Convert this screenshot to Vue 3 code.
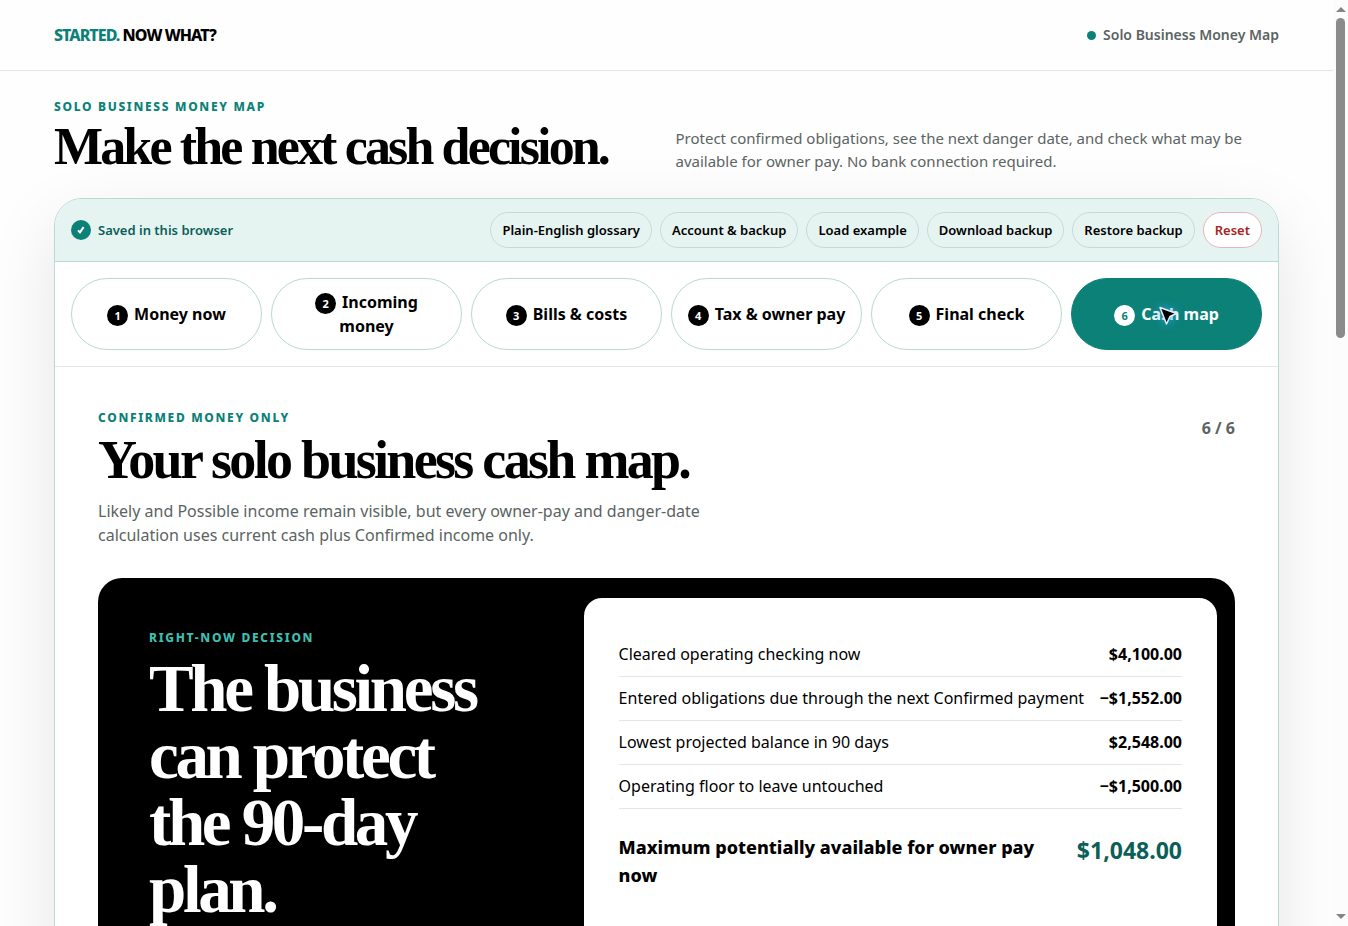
<template>
    <div class="window">
        <div class="page">
            <header class="site-header">
                <a class="brand" href="#"><span class="brand-accent">STARTED.</span> NOW WHAT?</a>
                <div class="product-label"><span class="product-dot"></span>Solo Business Money Map</div>
            </header>

            <main class="content">
                <section class="hero">
                    <div>
                        <p class="eyebrow">Solo Business Money Map</p>
                        <h1 class="hero-title">Make the next cash decision.</h1>
                    </div>
                    <p class="hero-text">Protect confirmed obligations, see the next danger date, and check what may be available for owner pay. No bank connection required.</p>
                </section>

                <section class="planner">
                    <div class="toolbar">
                        <div class="save-state">
                            <span class="save-icon">
                                <svg viewBox="0 0 20 20" fill="none" stroke="currentColor" stroke-width="2">
                                    <path d="M7 10.4 L8.9 12.4 L12.6 7.2" />
                                </svg>
                            </span>
                            Saved in this browser
                        </div>
                        <div class="toolbar-actions">
                            <button v-for="action in actions" :key="action" type="button" class="tool-button" :class="{ danger: action === 'Reset' }">
                                {{ action }}
                            </button>
                        </div>
                    </div>

                    <nav class="steps" aria-label="Money map steps">
                        <button v-for="(step, idx) in steps" :key="step" type="button" class="step" :class="{ active: current === idx + 1 }" @click="current = idx + 1">
                            <span class="step-number">{{ idx + 1 }}</span>{{ step }}
                        </button>
                        <svg class="pointer" viewBox="0 0 40 40" aria-hidden="true">
                            <path d="M12 13.5 L28.5 19.5 L22 22.5 L18.5 30 Z" fill="#000" stroke="#e8eef2" stroke-width="1.5" stroke-linejoin="round" />
                        </svg>
                    </nav>

                    <div class="step-body">
                        <div class="step-head">
                            <div class="step-intro">
                                <p class="eyebrow">Confirmed money only</p>
                                <h2 class="step-title">Your solo business cash map.</h2>
                                <p class="step-text">Likely and Possible income remain visible, but every owner-pay and danger-date calculation uses current cash plus Confirmed income only.</p>
                            </div>
                            <span class="step-count">{{ current }} / {{ steps.length }}</span>
                        </div>

                        <div class="decision">
                            <div class="decision-copy">
                                <p class="eyebrow light">Right-now decision</p>
                                <h3 class="decision-title">The business can protect the 90-day plan.</h3>
                            </div>
                            <dl class="figures">
                                <div v-for="row in rows" :key="row.label" class="figure-row">
                                    <dt>{{ row.label }}</dt>
                                    <dd>{{ formatMoney(row.amount) }}</dd>
                                </div>
                                <div class="figure-row total">
                                    <dt>Maximum potentially available for owner pay now</dt>
                                    <dd>{{ formatMoney(available) }}</dd>
                                </div>
                            </dl>
                        </div>
                    </div>
                </section>
            </main>
        </div>

        <div class="scrollbar" aria-hidden="true">
            <svg class="scroll-arrow" viewBox="0 0 10 6"><path d="M0 6 L5 1 L10 6 Z" /></svg>
            <div class="scroll-track">
                <div class="scroll-thumb"></div>
            </div>
            <svg class="scroll-arrow" viewBox="0 0 10 6"><path d="M0 0 L5 5 L10 0 Z" /></svg>
        </div>
    </div>
</template>

<script setup>
import { ref } from "vue"

const current = ref(6)

const actions = [
    "Plain-English glossary",
    "Account & backup",
    "Load example",
    "Download backup",
    "Restore backup",
    "Reset"
]

const steps = [
    "Money now",
    "Incoming money",
    "Bills & costs",
    "Tax & owner pay",
    "Final check",
    "Cash map"
]

const rows = [
    { label: "Cleared operating checking now", amount: 4100 },
    { label: "Entered obligations due through the next Confirmed payment", amount: -1552 },
    { label: "Lowest projected balance in 90 days", amount: 2548 },
    { label: "Operating floor to leave untouched", amount: -1500 }
]

const available = 1048

const formatMoney = (val) => {
    const text = new Intl.NumberFormat("en-US", { style: "currency", currency: "USD" }).format(Math.abs(val))
    return val < 0 ? "−" + text : text
}
</script>

<style>
body {
    margin: 0;
    background: #fefefe;
}
</style>

<style scoped>
.window {
    display: flex;
    height: 100vh;
    overflow: hidden;
    font-family: "Noto Sans", sans-serif;
    font-size: 16px;
    line-height: 24px;
    color: #000;
}

.window * {
    box-sizing: border-box;
}

.page {
    flex: 1;
    min-width: 0;
    overflow: hidden;
}

p, h1, h2, h3, dl, dd {
    margin: 0;
}

button {
    font-family: inherit;
    cursor: pointer;
}

.site-header {
    display: flex;
    align-items: center;
    justify-content: space-between;
    padding: 23px 54px;
    border-bottom: 1px solid #e2e6e5;
}

.brand {
    color: #000;
    font-weight: 800;
    letter-spacing: -0.06em;
    text-decoration: none;
}

.brand-accent {
    color: #0b8178;
}

.product-label {
    display: flex;
    align-items: center;
    gap: 7px;
    font-size: 14px;
    font-weight: 600;
    color: #5b6462;
}

.product-dot {
    width: 9px;
    height: 9px;
    border-radius: 50%;
    background: #0b8178;
}

.content {
    padding: 0 54px;
}

.hero {
    display: grid;
    grid-template-columns: 1fr 1fr;
    gap: 18px;
    align-items: end;
    padding: 27px 0 25px;
}

.eyebrow {
    font-size: 12px;
    line-height: 18px;
    font-weight: 800;
    letter-spacing: 0.14em;
    text-transform: uppercase;
    color: #0b8178;
}

.eyebrow.light {
    color: #3cbfb1;
}

.hero-title,
.step-title,
.decision-title {
    font-family: "Liberation Serif", serif;
    font-weight: 700;
    letter-spacing: -0.05em;
}

.hero-title {
    margin-top: 4px;
    font-size: 52px;
    line-height: 53px;
    letter-spacing: -0.055em;
    white-space: nowrap;
}

.hero-text {
    font-size: 15px;
    line-height: 23px;
    color: #5b6462;
}

.planner {
    border: 1px solid #b9d9d4;
    border-radius: 28px;
    background: #fff;
    box-shadow: 0 24px 70px rgba(0, 0, 0, 0.1);
    overflow: hidden;
}

.toolbar {
    display: flex;
    align-items: center;
    justify-content: space-between;
    padding: 13px 16px;
    background: #e5f4f1;
    border-bottom: 1px solid #b9d9d4;
}

.save-state {
    display: flex;
    align-items: center;
    gap: 7px;
    font-size: 13px;
    font-weight: 600;
    color: #0b5f58;
}

.save-icon {
    display: flex;
    width: 20px;
    height: 20px;
    border-radius: 50%;
    background: #0b8178;
    color: #fff;
}

.toolbar-actions {
    display: flex;
    gap: 8px;
}

.tool-button {
    padding: 8px 11px;
    border: 1px solid #c3dbd7;
    border-radius: 18px;
    background: transparent;
    color: #000;
    font-size: 13px;
    line-height: 18px;
    font-weight: 600;
}

.tool-button.danger {
    border-color: #eab4bb;
    background: #fff;
    color: #a82424;
}

/* Step navigation */
.steps {
    position: relative;
    display: grid;
    grid-template-columns: repeat(6, 1fr);
    gap: 9px;
    padding: 16px;
    border-bottom: 1px solid #e2e8e7;
}

.step {
    padding: 11px 14px;
    border: 1px solid #b9d9d4;
    border-radius: 36px;
    background: #fff;
    color: #000;
    font-size: 16px;
    line-height: 24px;
    font-weight: 700;
}

.step-number {
    display: inline-grid;
    place-items: center;
    width: 21px;
    height: 21px;
    margin-right: 6px;
    border-radius: 50%;
    background: #000;
    color: #fff;
    font-size: 11px;
    line-height: 21px;
}

.step.active {
    border-color: #0b8178;
    background: #0b8178;
    color: #fff;
}

.step.active .step-number {
    background: #fff;
    color: #0b8178;
}

.pointer {
    position: absolute;
    right: 90px;
    top: 32px;
    width: 40px;
    height: 40px;
    filter: drop-shadow(0 0 5px #2fa5f0);
    pointer-events: none;
}

.step-body {
    padding: 42px 43px;
}

.step-head {
    display: flex;
    justify-content: space-between;
}

.step-intro {
    max-width: 650px;
}

.step-title {
    margin-top: 5px;
    font-size: 54px;
    line-height: 56px;
    white-space: nowrap;
}

.step-text {
    margin-top: 11px;
    color: #5b6462;
}

.step-count {
    margin-top: 7px;
    font-weight: 700;
    color: #5b6462;
}

/* Decision panel */
.decision {
    display: grid;
    grid-template-columns: 23fr 30fr;
    margin-top: 31px;
    padding: 20px 18px 20px 0;
    border-radius: 24px;
    background: #000;
}

.decision-copy {
    padding: 31px 60px 31px 51px;
    color: #fff;
}

.decision-title {
    margin-top: 8px;
    font-size: 67px;
    line-height: 67px;
}

.figures {
    padding: 35px;
    border-radius: 18px;
    background: #fff;
}

.figure-row {
    display: flex;
    justify-content: space-between;
    gap: 12px;
    padding: 10px 0;
    border-bottom: 1px solid #e2e6e5;
    line-height: 23px;
}

.figure-row dd {
    font-weight: 700;
    white-space: nowrap;
}

.figure-row.total {
    gap: 28px;
    padding: 24px 0;
    border-bottom: 0;
    font-size: 18px;
    line-height: 28px;
    font-weight: 800;
}

.figure-row.total dd {
    font-size: 23px;
    line-height: 34px;
    color: #0b5f58;
}

.scrollbar {
    display: flex;
    flex-direction: column;
    align-items: center;
    justify-content: space-between;
    width: 15px;
    padding: 6px 0;
    background: #fcfcfc;
}

.scroll-arrow {
    width: 10px;
    height: 6px;
    fill: #858585;
}

.scroll-track {
    flex: 1;
    padding: 6px 0;
}

.scroll-thumb {
    width: 9px;
    height: 36%;
    border-radius: 5px;
    background: #8b8b8b;
}
</style>
